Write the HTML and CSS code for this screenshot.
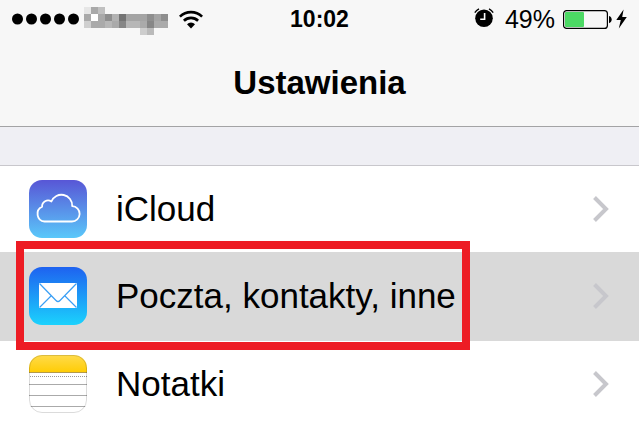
FILE: index.html
```html
<!DOCTYPE html>
<html lang="pl">
<head>
  <meta charset="UTF-8">
  <meta name="viewport" content="width=device-width, initial-scale=1.0">
  <title>Ustawienia</title>
  <link rel="stylesheet" href="styles.css">
</head>
<body>
  <header class="top">
    <div class="status-bar">
      <div class="status-left">
        <svg class="signal" width="68" height="12" viewBox="0 0 68 12" aria-hidden="true">
          <circle cx="5.5" cy="6" r="5.5"/>
          <circle cx="19.5" cy="6" r="5.5"/>
          <circle cx="33.5" cy="6" r="5.5"/>
          <circle cx="47.5" cy="6" r="5.5"/>
          <circle cx="61.5" cy="6" r="5.5"/>
        </svg>
        <!-- Carrier name, pixelated -->
        <svg class="carrier" width="84" height="28" viewBox="0 0 12 4" shape-rendering="crispEdges" aria-hidden="true">
          <path fill="#e6e6e6" d="M0 0h1v1H0z"/>
          <path fill="#a9a9a9" d="M1 0h1v1H1zM0 1h1v1H0zM2 1h1v1H2z"/>
          <path fill="#c0c0c0" d="M2 0h1v1H2z"/>
          <path fill="#fff" d="M1 1h1v1H1z"/>
          <path fill="#8e8e8e" d="M3 1h1v1H3zM11 1h1v1h-1zM9 1h1v1H9z"/>
          <path fill="#a4a4a4" d="M6 1h2v1H6zM8 1h1v1H8zM10 1h1v1h-1z"/>
          <path fill="#b2b2b2" d="M4 1h1v1H4z"/>
          <path fill="#747474" d="M5 1h1v1H5z"/>
          <path fill="#cfcfcf" d="M0 2h1v1H0z"/>
          <path fill="#aaa" d="M1 2h2v1H1zM4 2h1v1H4zM8 2h1v1H8zM10 2h2v1h-2z"/>
          <path fill="#b7b7b7" d="M3 2h1v1H3zM6 2h2v1H6z"/>
          <path fill="#868686" d="M5 2h1v1H5zM9 2h1v1H9z"/>
          <path fill="#cdcdcd" d="M8 3h1v1H8z"/>
          <path fill="#bababa" d="M9 3h1v1H9z"/>
        </svg>
        <svg class="wifi" width="24" height="19" viewBox="0 0 24 19" aria-hidden="true">
          <path fill="none" stroke="#000" stroke-width="2.6" d="M.9 6.6a16 16 0 0 1 22.2 0M4.9 10.8a10.2 10.2 0 0 1 14.2 0"/>
          <path d="M12 18.4 8 14.2a5.8 5.8 0 0 1 8 0z"/>
        </svg>
      </div>
      <time class="clock">10:02</time>
      <div class="status-right">
        <svg class="alarm" width="20" height="20" viewBox="0 0 20 20" aria-hidden="true">
          <circle cx="10" cy="10.2" r="8.8"/>
          <path fill="none" stroke="#000" stroke-width="1.4" d="M.8 4.6A11 11 0 0 1 5 .9M19.200 4.600A11 11 0 0 0 15 .9"/>
          <path fill="none" stroke="#fff" stroke-width="1.6" d="M10.6 5v6.200H6.200"/>
        </svg>
        <span class="percent">49%</span>
        <svg class="battery" width="49" height="19" viewBox="0 0 49 19" aria-hidden="true">
          <rect x=".6" y=".6" width="43.8" height="17.8" rx="3" fill="none" stroke="#000" stroke-width="1.2"/>
          <rect x="2" y="2" width="19" height="15" rx="1" fill="#4cd964"/>
          <path d="M46 6c3.6.8 3.6 6.4 0 7.2z"/>
        </svg>
        <svg class="bolt" width="11" height="20" viewBox="0 0 11 20" aria-hidden="true">
          <path d="M7.6.5.3 11h4.5L2.8 19.5 10.8 8H6.2z"/>
        </svg>
      </div>
    </div>
    <h1>Ustawienia</h1>
  </header>

  <ul class="settings">
    <li>
      <a href="#icloud">
        <svg class="app-icon" viewBox="0 0 58 58" aria-hidden="true">
          <defs>
            <linearGradient id="cloud-bg" x1="0" y1="0" x2="0" y2="1">
              <stop offset="0" stop-color="#5856d6"/>
              <stop offset="1" stop-color="#5ac8fa"/>
            </linearGradient>
          </defs>
          <rect width="58" height="58" rx="13" fill="url(#cloud-bg)"/>
          <path fill="none" stroke="#fff" stroke-width="1.8" stroke-linejoin="round" d="M15.500 41.500h27.200a7.700 7.700 0 0 0 .5-15.400A10.800 10.800 0 0 0 22.400 21.500a5.900 5.900 0 0 0-9.300 5.300A7.700 7.700 0 0 0 15.500 41.500z"/>
        </svg>
        <span class="label">iCloud</span>
        <svg class="chevron" viewBox="0 0 16 26" aria-hidden="true"><path d="M1.5 1.5 13 13 1.5 24.5"/></svg>
      </a>
    </li>
    <li class="selected">
      <a href="#mail">
        <svg class="app-icon" viewBox="0 0 58 58" aria-hidden="true">
          <defs>
            <linearGradient id="mail-bg" x1="0" y1="0" x2="0" y2="1">
              <stop offset="0" stop-color="#1e62f0"/>
              <stop offset="1" stop-color="#1bd2fd"/>
            </linearGradient>
          </defs>
          <rect width="58" height="58" rx="13" fill="url(#mail-bg)"/>
          <rect x="10" y="16" width="38" height="25" fill="#fff"/>
          <path fill="none" stroke="#3a9ff5" stroke-width="1.2" d="m10.500 16.500 16.500 17q2 2 4 0l16.500-17M10.500 40.500l12-12M47.500 40.500l-12-12"/>
        </svg>
        <span class="label">Poczta, kontakty, inne</span>
        <svg class="chevron" viewBox="0 0 16 26" aria-hidden="true"><path d="M1.5 1.5 13 13 1.5 24.5"/></svg>
      </a>
    </li>
    <li>
      <a href="#notes">
        <svg class="app-icon" viewBox="0 0 58 58" aria-hidden="true">
          <defs>
            <linearGradient id="notes-bg" x1="0" y1="0" x2="0" y2="1">
              <stop offset="0" stop-color="#ffdb4c"/>
              <stop offset="1" stop-color="#ffcc02"/>
            </linearGradient>
            <clipPath id="notes-clip"><rect width="58" height="58" rx="13"/></clipPath>
          </defs>
          <g clip-path="url(#notes-clip)">
            <rect width="58" height="58" fill="#fff"/>
            <rect width="58" height="18" fill="url(#notes-bg)"/>
            <path stroke="#b39a4a" d="M0 17.5h58"/>
            <path stroke="#aaa" d="M0 29.5h58M0 40.5h58M0 51.5h58"/>
            <path stroke="#999" stroke-dasharray="1 1" d="M1 21.5h57"/>
          </g>
          <rect x=".5" y=".5" width="57" height="57" rx="12.5" fill="none" stroke="#000" stroke-opacity=".14"/>
        </svg>
        <span class="label">Notatki</span>
        <svg class="chevron" viewBox="0 0 16 26" aria-hidden="true"><path d="M1.5 1.5 13 13 1.5 24.5"/></svg>
      </a>
    </li>
  </ul>
</body>
</html>
```
FILE: styles.css
```css
*,
*::after {
  box-sizing: border-box;
}

body {
  margin: 0;
  background: #efeff4;
  color: #000;
  font-family: "Liberation Sans", Arial, sans-serif;
}

svg {
  display: block;
  flex-shrink: 0;
}

/* Status bar and title */
.top {
  background: #f7f7f7;
  border-bottom: 1px solid #a3a3a5;
  padding-bottom: 22px;
}

.status-bar {
  display: grid;
  grid-template-columns: 1fr auto 1fr;
  align-items: center;
  height: 38px;
  padding: 0 12px;
}

.status-left,
.status-right {
  display: flex;
  align-items: center;
}

.status-left {
  gap: 4px;
}

.carrier {
  margin-top: 4px;
}

.wifi {
  margin-left: 7px;
}

.clock {
  font-size: 23px;
  font-weight: bold;
}

.status-right {
  justify-content: flex-end;
}

.alarm {
  margin-bottom: 2px;
}

.percent {
  margin: 0 8px 0 11px;
  font-size: 25px;
}

.bolt {
  margin-left: 4px;
}

h1 {
  margin: 24px 0 0;
  font-size: 33px;
  line-height: 42px;
  text-align: center;
}

/* Settings list */
.settings {
  list-style: none;
  margin: 38px 0 0;
  padding: 0;
  background: #fff;
  border-top: 1px solid #c8c7cc;
}

.settings a {
  display: flex;
  align-items: center;
  padding: 14px 30px 14px 29px;
  color: inherit;
  text-decoration: none;
}

.settings li:last-child {
  padding-bottom: 16px;
}

.settings .selected {
  position: relative;
  background: #d9d9d9;
}

.settings .selected a {
  padding-top: 15px;
  padding-bottom: 16px;
}

/* Red frame round the selected row */
.selected::after {
  content: "";
  position: absolute;
  top: -11px;
  bottom: -9px;
  left: 16px;
  width: 454px;
  border: 8px solid #ed1c24;
  pointer-events: none;
}

.app-icon {
  width: 58px;
  height: 58px;
}

.label {
  flex: 1;
  margin-left: 29px;
  font-size: 35px;
  line-height: 40px;
}

.chevron {
  width: 16px;
  height: 26px;
  fill: none;
  stroke: #c7c7cc;
  stroke-width: 4;
}
```
